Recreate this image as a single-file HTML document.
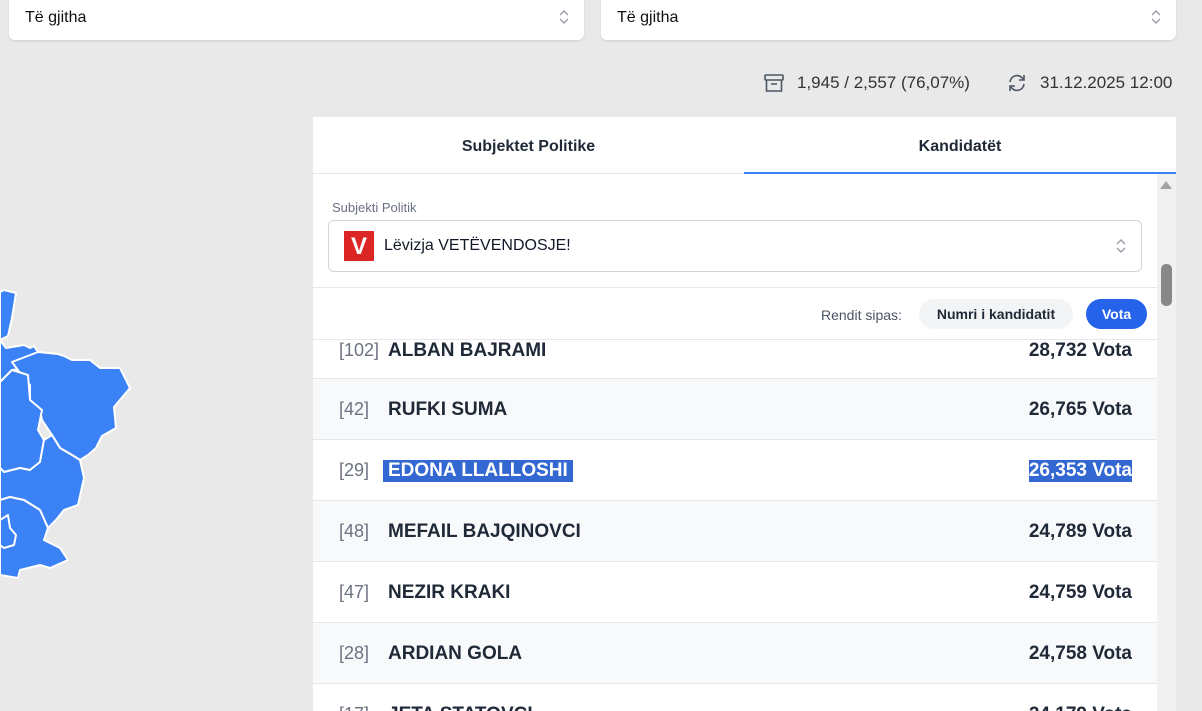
<!DOCTYPE html>
<html><head><meta charset="utf-8">
<style>
*{box-sizing:border-box;margin:0;padding:0}
html,body{width:1202px;height:711px;overflow:hidden}
body{background:#e9e9e9;font-family:"Liberation Sans","DejaVu Sans",sans-serif;position:relative;color:#111827}
.sel{position:absolute;top:-6px;height:46px;background:#fff;border-radius:6px;box-shadow:0 1px 2px rgba(0,0,0,.12);font-size:16px;padding:15px 0 0 16px;color:#111}
.chev{position:absolute;right:14px;top:14px}
.stats{position:absolute;top:73px;font-size:17px;color:#333}
.panel{position:absolute;left:313px;top:117px;width:863px;height:594px;background:#fff;overflow:hidden}
.tab{position:absolute;top:0;height:57px;font-size:16px;font-weight:bold;text-align:center;line-height:60px;color:#1f2937;border-bottom:1px solid #e5e7eb}
.row{position:absolute;left:0;width:844px;height:61px;border-top:1px solid #e5e7eb;overflow:hidden}
.row.alt{background:#f8f9fb}
.num{position:absolute;left:26px;top:20px;font-size:18px;color:#6b7280}
.nm{position:absolute;left:75px;top:20px;font-size:19px;font-weight:bold;color:#1f2937}
.vt{position:absolute;right:25px;top:20px;font-size:19px;font-weight:bold;color:#1f2937}
.hl{background:#3367d1;color:#fff}
</style></head><body>
<svg style="position:absolute;left:0;top:280px" width="140" height="300" viewBox="0 280 140 300">
<g fill="#3b82f6" stroke="#fff" stroke-width="2" stroke-linejoin="round">
<path d="M0 292 L4 290 L16 293 L12 318 L8 336 L0 340Z"/>
<path d="M0 340 L6 348 L24 345 L30 348 L34 346 L38 352 L32 368 L12 370 L0 382Z"/>
<path d="M12 362 L38 352 L58 354 L64 356 L72 360 L90 360 L100 368 L120 368 L130 388 L114 407 L116 428 L102 436 L96 448 L88 455 L80 460 L72 455 L60 448 L52 435 L42 420 L40 410 L30 400 L30 385 L20 373 Z"/>
<path d="M0 382 L12 370 L28 375 L30 400 L42 410 L38 430 L44 440 L40 462 L30 470 L20 468 L4 472 L0 468Z"/>
<path d="M0 468 L4 472 L20 468 L30 470 L40 462 L44 440 L52 435 L60 448 L72 455 L80 460 L84 478 L78 505 L64 510 L56 520 L48 528 L40 510 L24 500 L10 497 L0 500Z"/>
<path d="M0 500 L10 497 L24 500 L40 510 L48 528 L44 540 L60 548 L68 560 L50 568 L40 565 L20 570 L18 578 L0 575Z"/>
<path d="M0 520 L8 515 L10 528 L16 535 L14 545 L4 548 L0 545Z"/>
</g></svg>

<div class="sel" style="left:9px;width:575px">Të gjitha<svg class="chev" width="12" height="18" viewBox="0 0 12 18"><path d="M2 7 L6 3 L10 7 M2 11 L6 15 L10 11" fill="none" stroke="#9ca3af" stroke-width="1.5"/></svg></div>
<div class="sel" style="left:601px;width:575px">Të gjitha<svg class="chev" width="12" height="18" viewBox="0 0 12 18"><path d="M2 7 L6 3 L10 7 M2 11 L6 15 L10 11" fill="none" stroke="#9ca3af" stroke-width="1.5"/></svg></div>

<svg style="position:absolute;left:763px;top:72px" width="22" height="22" viewBox="0 0 22 22"><g fill="none" stroke="#4b5563" stroke-width="1.6"><rect x="2" y="3" width="18" height="5" rx="1"/><path d="M3.5 8 V19 H18.5 V8 M8 12 H14"/></g></svg>
<div class="stats" style="left:797px">1,945 / 2,557 (76,07%)</div>
<svg style="position:absolute;left:1006px;top:72px" width="22" height="22" viewBox="0 0 22 22"><g fill="none" stroke="#4b5563" stroke-width="1.6"><path d="M4 10 A7 7 0 0 1 17 7 M18 3 V8 H13"/><path d="M18 12 A7 7 0 0 1 5 15 M4 19 V14 H9"/></g></svg>
<div class="stats" style="left:1040px">31.12.2025 12:00</div>

<div class="panel">
<div class="tab" style="left:0;width:431px">Subjektet Politike</div>
<div class="tab" style="left:431px;width:432px;border-bottom:2px solid #3b82f6">Kandidatët</div>

<div style="position:absolute;left:19px;top:83px;font-size:13px;color:#6b7280">Subjekti Politik</div>
<div style="position:absolute;left:15px;top:103px;width:814px;height:52px;border:1px solid #d1d5db;border-radius:6px;background:#fff">
<div style="position:absolute;left:15px;top:10px;width:30px;height:30px;background:#dc2626;color:#fff;font-weight:bold;font-size:24px;text-align:center;line-height:31px">V</div>
<div style="position:absolute;left:55px;top:16px;font-size:16px;color:#111827">Lëvizja VETËVENDOSJE!</div>
<svg style="position:absolute;right:14px;top:16px" width="12" height="18" viewBox="0 0 12 18"><path d="M2 7 L6 3 L10 7 M2 11 L6 15 L10 11" fill="none" stroke="#9ca3af" stroke-width="1.5"/></svg>
</div>
<div style="position:absolute;left:0;top:170px;width:844px;height:52px;border-top:1px solid #e5e7eb;background:#fff">
<div style="position:absolute;left:508px;top:19px;font-size:14px;color:#4b5563">Rendit sipas:</div>
<div style="position:absolute;left:606px;top:11px;width:154px;height:30px;border-radius:15px;background:#f3f4f6;font-size:14px;font-weight:bold;line-height:30px;text-align:center;color:#1f2937">Numri i kandidatit</div>
<div style="position:absolute;left:773px;top:11px;width:61px;height:30px;border-radius:15px;background:#2563eb;font-size:14px;font-weight:bold;line-height:30px;text-align:center;color:#fff">Vota</div>
</div>

<div class="row" style="top:222px;height:39px"><span class="num" style="top:0px">[102]</span><span class="nm" style="top:0px">ALBAN BAJRAMI</span><span class="vt" style="top:0px">28,732 Vota</span></div>
<div class="row alt" style="top:261px"><span class="num">[42]</span><span class="nm">RUFKI SUMA</span><span class="vt">26,765 Vota</span></div>
<div class="row" style="top:322px"><span class="num">[29]</span><span class="nm hl" style="left:70px;padding:0 5px 0 5px">EDONA LLALLOSHI</span><span class="vt hl">26,353 Vota</span></div>
<div class="row alt" style="top:383px"><span class="num">[48]</span><span class="nm">MEFAIL BAJQINOVCI</span><span class="vt">24,789 Vota</span></div>
<div class="row" style="top:444px"><span class="num">[47]</span><span class="nm">NEZIR KRAKI</span><span class="vt">24,759 Vota</span></div>
<div class="row alt" style="top:505px"><span class="num">[28]</span><span class="nm">ARDIAN GOLA</span><span class="vt">24,758 Vota</span></div>
<div class="row" style="top:566px;height:28px"><span class="num">[17]</span><span class="nm">JETA STATOVCI</span><span class="vt">24,179 Vota</span></div>

<div style="position:absolute;left:844px;top:57px;width:19px;height:537px;background:#f1f1f1"></div>
<div style="position:absolute;left:847px;top:64px;width:0;height:0;border-left:6px solid transparent;border-right:6px solid transparent;border-bottom:8px solid #a3a3a3"></div>
<div style="position:absolute;left:848px;top:147px;width:11px;height:42px;background:#888;border-radius:5px"></div>
</div>
</body></html>
